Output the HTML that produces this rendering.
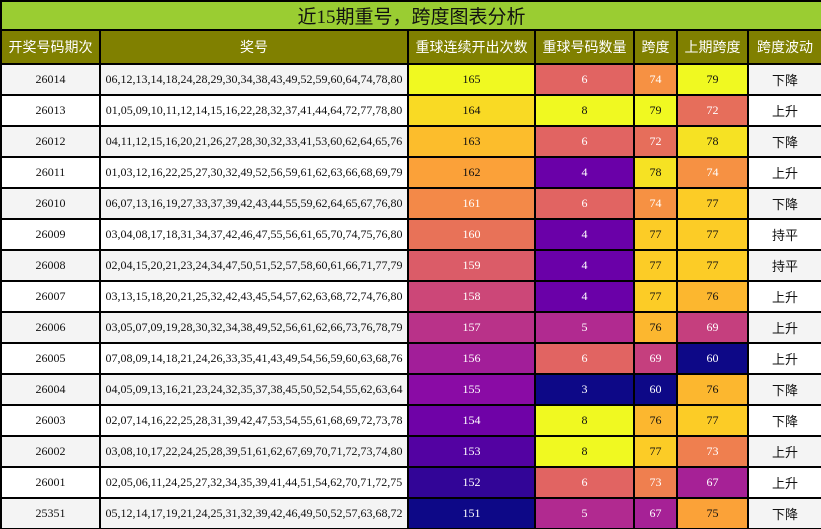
<!DOCTYPE html>
<html><head><meta charset="utf-8"><style>
html,body{margin:0;padding:0;background:#fff;width:821px;height:529px;overflow:hidden}
table{border-collapse:collapse;table-layout:fixed;width:821px;font-family:"Liberation Serif","Noto Serif CJK SC",serif;font-size:12px;color:#111}
td,th{border:2px solid #000;text-align:center;padding:0;white-space:nowrap;overflow:hidden}
.t td{background:#9acd32;height:25px;font-family:"Liberation Serif","Noto Sans CJK SC",serif;font-size:19px;color:#111;border-bottom:2px solid #000}
.h th{background:#808000;color:#fff;font-weight:normal;font-size:14px;height:32px;font-family:"Liberation Sans","Noto Sans CJK SC",sans-serif}
tr.r td{height:29px}
tr.r:nth-child(odd) td.p{background:#f4f4f4}
.w{color:#fff}
.cn{font-family:"Liberation Sans","Noto Sans CJK SC",sans-serif;font-size:13px}
</style></head><body>
<table>
<colgroup><col style="width:99px"><col style="width:308px"><col style="width:127px"><col style="width:99px"><col style="width:43px"><col style="width:71px"><col style="width:74px"></colgroup>
<tr class="t"><td colspan="7">近15期重号，跨度图表分析</td></tr>
<tr class="h"><th>开奖号码期次</th><th>奖号</th><th>重球连续开出次数</th><th>重球号码数量</th><th>跨度</th><th>上期跨度</th><th>跨度波动</th></tr>
<tbody id="b"></tbody>
</table>
<script>
var d=[
["26014","06,12,13,14,18,24,28,29,30,34,38,43,49,52,59,60,64,74,78,80",165,6,74,79,"下降"],
["26013","01,05,09,10,11,12,14,15,16,22,28,32,37,41,44,64,72,77,78,80",164,8,79,72,"上升"],
["26012","04,11,12,15,16,20,21,26,27,28,30,32,33,41,53,60,62,64,65,76",163,6,72,78,"下降"],
["26011","01,03,12,16,22,25,27,30,32,49,52,56,59,61,62,63,66,68,69,79",162,4,78,74,"上升"],
["26010","06,07,13,16,19,27,33,37,39,42,43,44,55,59,62,64,65,67,76,80",161,6,74,77,"下降"],
["26009","03,04,08,17,18,31,34,37,42,46,47,55,56,61,65,70,74,75,76,80",160,4,77,77,"持平"],
["26008","02,04,15,20,21,23,24,34,47,50,51,52,57,58,60,61,66,71,77,79",159,4,77,77,"持平"],
["26007","03,13,15,18,20,21,25,32,42,43,45,54,57,62,63,68,72,74,76,80",158,4,77,76,"上升"],
["26006","03,05,07,09,19,28,30,32,34,38,49,52,56,61,62,66,73,76,78,79",157,5,76,69,"上升"],
["26005","07,08,09,14,18,21,24,26,33,35,41,43,49,54,56,59,60,63,68,76",156,6,69,60,"上升"],
["26004","04,05,09,13,16,21,23,24,32,35,37,38,45,50,52,54,55,62,63,64",155,3,60,76,"下降"],
["26003","02,07,14,16,22,25,28,31,39,42,47,53,54,55,61,68,69,72,73,78",154,8,76,77,"下降"],
["26002","03,08,10,17,22,24,25,28,39,51,61,62,67,69,70,71,72,73,74,80",153,8,77,73,"上升"],
["26001","02,05,06,11,24,25,27,32,34,35,39,41,44,51,54,62,70,71,72,75",152,6,73,67,"上升"],
["25351","05,12,14,17,19,21,24,25,31,32,39,42,46,49,50,52,57,63,68,72",151,5,67,75,"下降"]];
var P=[[13,8,135],[65,4,157],[106,0,168],[143,13,164],[177,42,144],[204,71,120],[225,100,98],[242,132,75],[252,166,54],[252,206,37],[240,249,33]];
function pl(t){t=Math.max(0,Math.min(1,t));var x=t*10,i=Math.min(9,Math.floor(x)),f=x-i,a=P[i],b=P[i+1];
return "rgb("+[0,1,2].map(function(k){return Math.round(a[k]+(b[k]-a[k])*f)}).join(",")+")";}
function cell(t){return '<td style="background:'+pl(t)+'"'+(t<0.76?' class="w"':'')+'>';}
var h="";
d.forEach(function(r){
h+='<tr class="r"><td class="p">'+r[0]+'</td><td class="p">'+r[1]+'</td>'+
cell((r[2]-151)/14)+r[2]+'</td>'+cell((r[3]-3)/5)+r[3]+'</td>'+
cell((r[4]-60)/19)+r[4]+'</td>'+cell((r[5]-60)/19)+r[5]+'</td><td class="p cn">'+r[6]+'</td></tr>';});
document.getElementById("b").innerHTML=h;
</script>
</body></html>
